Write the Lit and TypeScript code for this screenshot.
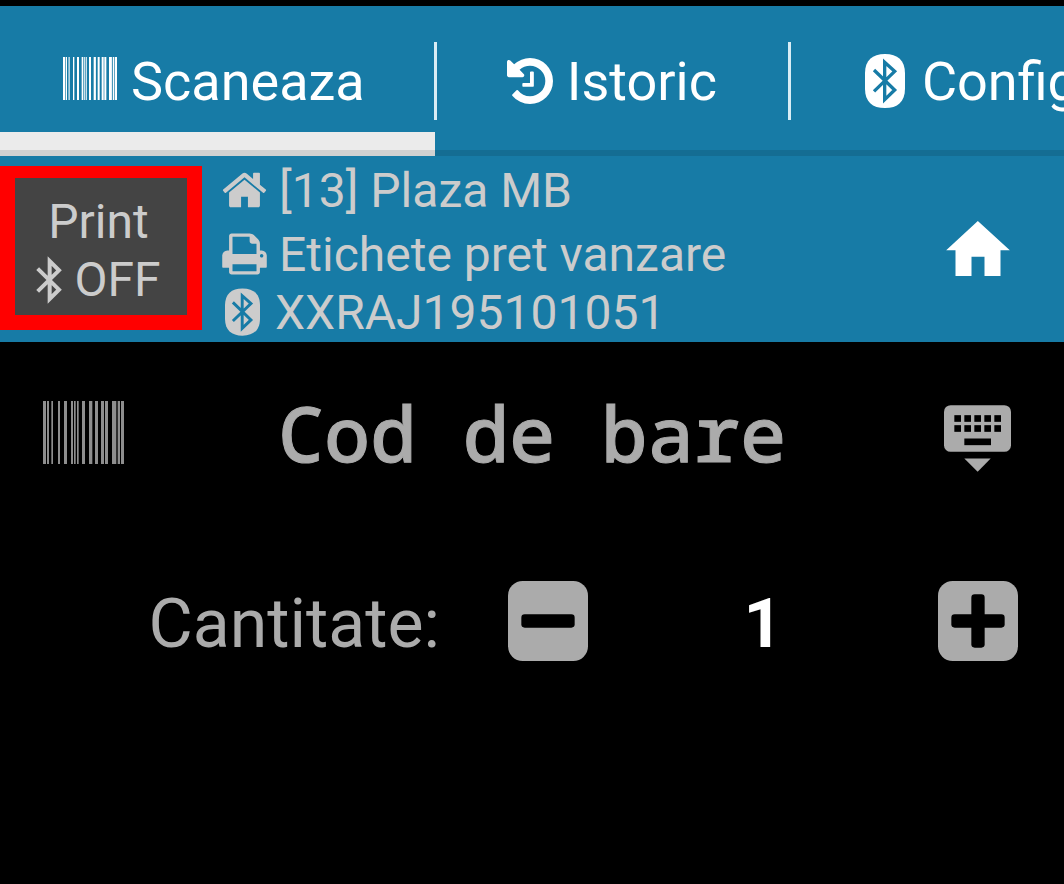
import { LitElement, html, css, svg } from "lit";
import { customElement, state } from "lit/decorators.js";

// [start, width] of each bar on a 243-unit wide code
const BARS: number[][] = [
  [0, 9], [12, 6], [25, 5], [45, 6], [63, 9], [84, 6], [93, 5], [102, 5],
  [117, 9], [138, 10], [156, 9], [174, 9], [186, 9], [207, 13], [224, 7], [234, 9],
];

const barcode = (cls: string) => html`
  <svg class=${cls} viewBox="0 0 243 189" preserveAspectRatio="none" aria-hidden="true">
    ${BARS.map(([x, w]) => svg`<rect x=${x} y="0" width=${w} height="189" fill="currentColor" />`)}
  </svg>`;

const bluetoothBadge = (cls: string, rune: string) => html`
  <svg class=${cls} viewBox="255 162 120 162" aria-hidden="true">
    <path fill="currentColor" d="M315 162C353 162 375 181 375 220V266C375 305 353 324 315 324C277 324 255 305 255 266V220C255 181 277 162 315 162Z" />
    <path fill="none" stroke=${rune} stroke-width="10" d="M282 210L344 270L314 299V187L344 214L282 274" />
  </svg>`;

const bluetoothRune = html`
  <svg class="rune" viewBox="108 315 76 144" aria-hidden="true">
    <path fill="none" stroke="currentColor" stroke-width="12" d="M112 353L176 416L148 444V330L176 358L112 421" />
  </svg>`;

const historyIcon = html`
  <svg class="history" viewBox="128 128 1536 1536" aria-hidden="true">
    <path fill="currentColor" d="M1664 896q0 156-61 298t-164 245-245 164-298 61q-172 0-327-72.5t-264-204.5q-7-10-6.5-22.5t8.5-20.5l137-138q10-9 25-9 16 2 23 12 73 95 179 147t225 52q104 0 198.5-40.5t163.5-109.5 109.5-163.5 40.5-198.5-40.5-198.5-109.5-163.5-163.5-109.5-198.5-40.5q-98 0-188 35.5t-160 101.5l137 138q31 30 14 69-17 40-59 40h-448q-26 0-45-19t-19-45v-448q0-42 40-59 39-17 69 14l130 129q107-101 244.5-156.5t284.5-55.5q156 0 298 61t245 164 164 245 61 298zm-640-288v448q0 14-9 23t-23 9h-320q-14 0-23-9t-9-23v-64q0-14 9-23t23-9h224v-352q0-14 9-23t23-9h64q14 0 23 9t9 23z" />
  </svg>`;

const shopIcon = html`
  <svg class="line-icon" viewBox="64 0 1664 1792" aria-hidden="true">
    <path fill="currentColor" d="M1472 992v480q0 26-19 45t-45 19h-384v-384h-256v384h-384q-26 0-45-19t-19-45v-480q0-1 .5-3t.5-3l575-474 575 474q1 2 1 6zm223-69l-62 74q-8 9-21 11h-3q-13 0-21-7l-692-577-692 577q-12 8-24 7-13-2-21-11l-62-74q-8-10-7-23.5t11-21.5l719-599q32-26 76-26t76 26l244 204v-195q0-14 9-23t23-9h192q14 0 23 9t9 23v408l219 182q10 8 11 21.5t-7 23.5z" />
  </svg>`;

const printerIcon = html`
  <svg class="line-icon" viewBox="64 0 1664 1792" aria-hidden="true">
    <path fill="currentColor" d="M448 1536h896v-256h-896v256zm0-640h896v-384h-160q-40 0-68-28t-28-68v-160h-640v640zm1152 64q0-26-19-45t-45-19-45 19-19 45 19 45 45 19 45-19 19-45zm128 0v416q0 13-9.5 22.5t-22.5 9.5h-224v160q0 40-28 68t-68 28h-960q-40 0-68-28t-28-68v-160h-224q-13 0-22.5-9.5t-9.5-22.5v-416q0-79 56.5-135.5t135.5-56.5h64v-544q0-40 28-68t68-28h672q40 0 88 20t76 48l152 152q28 28 48 76t20 88v256h64q79 0 135.5 56.5t56.5 135.5z" />
  </svg>`;

const homeIcon = html`
  <svg class="home-icon" viewBox="1157 181 191 165" aria-hidden="true">
    <path fill="currentColor" d="M1252 181L1348 269H1320V346H1272V288H1233V346H1185V269H1157Z" />
  </svg>`;

const keyboardIcon = html`
  <svg class="keyboard-icon" viewBox="70 75 201 200" aria-hidden="true">
    <rect x="70" y="75" width="201" height="140" rx="20" fill="currentColor" />
    ${[105, 135].map((y) =>
      [101, 131, 161, 191, 221].map((x) => svg`<rect x=${x} y=${y} width="20" height="20" fill="#000" />`)
    )}
    <rect x="131" y="175" width="80" height="20" fill="#000" />
    <path fill="currentColor" d="M131 235H210L171 275Z" />
  </svg>`;

const stepIcon = (plus: boolean) => html`
  <svg class="step-icon" viewBox="0 0 240 240" aria-hidden="true">
    <rect width="240" height="240" rx="44" fill="currentColor" />
    <rect x="40" y="100" width="160" height="40" rx="10" fill="#000" />
    ${plus ? svg`<rect x="100" y="40" width="40" height="160" rx="10" fill="#000" />` : ""}
  </svg>`;

@customElement("app-root")
export class AppRoot extends LitElement {
  @state() private quantity = 1;

  static styles = css`
    :host {
      display: block;
      min-height: 100vh;
      overflow: hidden;
      box-sizing: border-box;
      padding-top: 6px;
      background: #000;
      color: #ababab;
      font-family: Roboto, sans-serif;
    }
    * { box-sizing: border-box; }
    svg { display: block; flex: none; }
    button, input {
      margin: 0;
      padding: 0;
      border: 0;
      background: none;
      color: inherit;
      font: inherit;
    }
    .tabs {
      position: relative;
      display: flex;
      align-items: center;
      height: 150px;
      overflow: hidden;
      background: #177ba6;
      color: #fff;
      font-size: 54px;
    }
    .tabs::after {
      content: "";
      position: absolute;
      inset: auto 0 0 0;
      height: 6px;
      background: rgba(0, 0, 0, 0.11);
    }
    .tab {
      display: flex;
      flex: none;
      align-items: center;
      gap: 14px;
      height: 100%;
      padding: 0 72px;
      white-space: nowrap;
    }
    .tab.first { padding: 0 70px 0 63px; }
    .tab.active { box-shadow: inset 0 -24px #ebebeb; }
    .tab.last { padding-left: 76px; gap: 17px; }
    .divider {
      flex: none;
      width: 3px;
      height: 78px;
      margin: 0 -2px 0 -1px;
      background: #d9edf5;
      z-index: 1;
    }
    .tab-barcode { width: 54px; height: 43px; margin-bottom: 6px; }
    .history { width: 46px; height: 46px; }
    .tab-bluetooth { width: 40px; height: 54px; }

    .status {
      display: grid;
      grid-template-columns: auto 1fr 173px;
      background: #177ba6;
      color: #ccc;
      font-size: 48px;
      line-height: 58px;
    }
    .print {
      align-self: start;
      width: 202px;
      margin-top: 10px;
      padding: 15px 5px 6px 0;
      border: solid #f00;
      border-width: 12px 15px 15px;
      background: #444;
      white-space: nowrap;
    }
    .print-line {
      display: flex;
      align-items: center;
      justify-content: center;
      gap: 12px;
    }
    .rune { width: 26px; height: 48px; }
    .info {
      margin: 0;
      padding: 6px 0 0 20px;
      list-style: none;
      white-space: nowrap;
    }
    .info-line {
      display: flex;
      align-items: center;
      gap: 12px;
    }
    .info-line.shop { margin-bottom: 6px; }
    .info-line.device { padding-left: 3px; gap: 15px; }
    .line-icon { width: 45px; height: 48px; margin-bottom: 2px; }
    .line-bluetooth { width: 35px; height: 48px; margin-bottom: 2px; }
    .icon-button {
      display: flex;
      align-items: center;
      justify-content: center;
      color: #fff;
    }
    .home-icon { width: 64px; height: 55px; margin-bottom: 2px; }

    .scan {
      display: grid;
      grid-template-columns: 173px 1fr 173px;
      align-items: center;
      height: 180px;
    }
    .scan-label { padding-left: 43px; color: #8e8e8e; }
    .scan-barcode { width: 81px; height: 63px; }
    .code {
      width: 100%;
      min-width: 0;
      font-family: "Noto Sans Mono", "DejaVu Sans Mono", monospace;
      font-size: 77px;
      font-weight: 500;
      text-align: center;
      outline: none;
    }
    .code::placeholder {
      color: #ababab;
      opacity: 1;
      -webkit-text-stroke: 1px #ababab;
    }
    .scan .icon-button { padding-top: 12px; color: #ababab; }
    .keyboard-icon { width: 67px; height: 67px; }

    .quantity {
      display: grid;
      grid-template-columns: 508fr 80px 350fr 80px;
      align-items: center;
      height: 190px;
      margin-top: 4px;
      padding-right: 46px;
      font-size: 68px;
    }
    .quantity-label { padding: 5px 68px 0 0; text-align: right; }
    .amount {
      width: 100%;
      min-width: 0;
      padding-top: 5px;
      color: #fff;
      font-weight: 700;
      text-align: center;
      outline: none;
    }
    .step-icon { width: 80px; height: 80px; }
  `;

  private step(by: number) {
    this.quantity = Math.max(1, this.quantity + by);
  }

  render() {
    return html`
      <nav class="tabs" role="tablist">
        <button class="tab first active" role="tab" aria-selected="true">${barcode("tab-barcode")}Scaneaza</button>
        <span class="divider"></span>
        <button class="tab" role="tab" aria-selected="false">${historyIcon}Istoric</button>
        <span class="divider"></span>
        <button class="tab last" role="tab" aria-selected="false">${bluetoothBadge("tab-bluetooth", "#177ba6")}Configurare</button>
      </nav>
      <section class="status">
        <button class="print">
          <span class="print-line">Print</span>
          <span class="print-line">${bluetoothRune}OFF</span>
        </button>
        <ul class="info">
          <li class="info-line shop">${shopIcon}[13] Plaza MB</li>
          <li class="info-line">${printerIcon}Etichete pret vanzare</li>
          <li class="info-line device">${bluetoothBadge("line-bluetooth", "#177ba6")}XXRAJ195101051</li>
        </ul>
        <button class="icon-button" aria-label="Acasa">${homeIcon}</button>
      </section>
      <main>
        <div class="scan">
          <label class="scan-label" for="code" aria-label="Cod de bare">${barcode("scan-barcode")}</label>
          <input class="code" id="code" type="text" placeholder="Cod de bare" />
          <button class="icon-button" aria-label="Tastatura">${keyboardIcon}</button>
        </div>
        <div class="quantity">
          <label class="quantity-label" for="amount">Cantitate:</label>
          <button aria-label="Minus" @click=${() => this.step(-1)}>${stepIcon(false)}</button>
          <input class="amount" id="amount" type="text" inputmode="numeric" .value=${String(this.quantity)} />
          <button aria-label="Plus" @click=${() => this.step(1)}>${stepIcon(true)}</button>
        </div>
      </main>
    `;
  }
}
